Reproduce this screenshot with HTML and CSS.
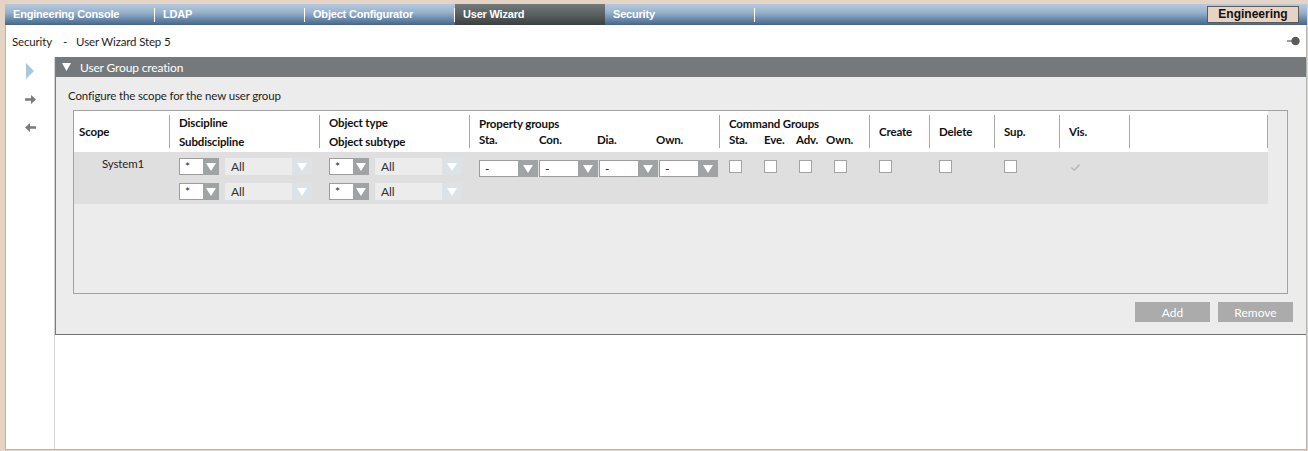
FILE: index.html
```html
<!DOCTYPE html>
<html lang="en">
<head>
  <meta charset="UTF-8" />
  <title>Security - User Wizard Step 5</title>
  <link rel="stylesheet" href="styles.css">
</head>
<body>
  <div class="frame">
    <!-- Top application tabs -->
    <nav class="tabs">
      <div class="tab">Engineering Console</div><span class="sep"></span>
      <div class="tab">LDAP</div><span class="sep"></span>
      <div class="tab">Object Configurator</div><span class="sep"></span>
      <div class="tab active">User Wizard</div>
      <div class="tab">Security</div><span class="sep"></span>
      <div class="mode">Engineering</div>
    </nav>

    <div class="crumb">
      <span>Security</span><span class="dash">-</span><span>User Wizard Step 5</span>
      <svg class="pin" width="13" height="10" viewBox="0 0 13 10">
        <line x1="0" y1="5" x2="6" y2="5" stroke="#5b5b5b" stroke-width="1.2" />
        <circle cx="8.5" cy="5" r="4.2" fill="#5b5b5b" />
      </svg>
    </div>

    <div class="main">
      <aside class="side">
        <svg class="play" width="8" height="16" viewBox="0 0 8 16"><polygon points="0,0 8,8 0,16" fill="#a9c8d8" /></svg>
        <svg class="arrow-next" width="11" height="9" viewBox="0 0 11 9"><path d="M0 3.2 H6 V0 L11 4.5 L6 9 V5.8 H0 Z" fill="#7b7b7b" /></svg>
        <svg class="arrow-prev" width="11" height="9" viewBox="0 0 11 9"><path d="M11 3.2 H5 V0 L0 4.5 L5 9 V5.8 H11 Z" fill="#7b7b7b" /></svg>
      </aside>

      <div class="content">
        <section class="panel">
          <header class="panel-head">
            <svg class="caret" width="9" height="8" viewBox="0 0 9 8"><polygon points="0,0 9,0 4.5,8" fill="#fff" /></svg>
            User Group creation
          </header>
          <div class="panel-body">
            <p class="hint">Configure the scope for the new user group</p>

            <div class="scope-table">
              <div class="thead">
                <div class="th first"><span>Scope</span></div>
                <div class="th two-line"><span>Discipline</span><span>Subdiscipline</span></div>
                <div class="th two-line"><span>Object type</span><span>Object subtype</span></div>
                <div class="th two-tight">
                  <span>Property groups</span>
                  <div class="sub-labels prop"><span>Sta.</span><span>Con.</span><span>Dia.</span><span>Own.</span></div>
                </div>
                <div class="th two-tight">
                  <span>Command Groups</span>
                  <div class="sub-labels cmd"><span>Sta.</span><span>Eve.</span><span>Adv.</span><span>Own.</span></div>
                </div>
                <div class="th"><span>Create</span></div>
                <div class="th"><span>Delete</span></div>
                <div class="th"><span>Sup.</span></div>
                <div class="th"><span>Vis.</span></div>
                <div class="th"></div>
              </div>

              <div class="trow">
                <div class="td scope-name">System1</div>
                <div class="td stack">
                  <div class="pair">
                    <div class="combo small"><span class="val">*</span><span class="btn"></span></div>
                    <div class="combo all"><span class="val">All</span><span class="btn"></span></div>
                  </div>
                  <div class="pair">
                    <div class="combo small"><span class="val">*</span><span class="btn"></span></div>
                    <div class="combo all"><span class="val">All</span><span class="btn"></span></div>
                  </div>
                </div>
                <div class="td stack">
                  <div class="pair">
                    <div class="combo small"><span class="val">*</span><span class="btn"></span></div>
                    <div class="combo all"><span class="val">All</span><span class="btn"></span></div>
                  </div>
                  <div class="pair">
                    <div class="combo small"><span class="val">*</span><span class="btn"></span></div>
                    <div class="combo all"><span class="val">All</span><span class="btn"></span></div>
                  </div>
                </div>
                <div class="td props">
                  <div class="combo prop"><span class="val">-</span><span class="btn"></span></div>
                  <div class="combo prop"><span class="val">-</span><span class="btn"></span></div>
                  <div class="combo prop"><span class="val">-</span><span class="btn"></span></div>
                  <div class="combo prop"><span class="val">-</span><span class="btn"></span></div>
                </div>
                <div class="td checks cmd">
                  <span class="box"></span><span class="box"></span><span class="box"></span><span class="box"></span>
                </div>
                <div class="td checks"><span class="box"></span></div>
                <div class="td checks"><span class="box"></span></div>
                <div class="td checks"><span class="box"></span></div>
                <div class="td checks">
                  <svg class="tick" width="13" height="13" viewBox="0 0 13 13"><path d="M2.5 6.5 L5.2 9.2 L10.5 3.6" fill="none" stroke="#b9b9b9" stroke-width="1.6" /></svg>
                </div>
                <div class="td"></div>
              </div>
            </div>

            <div class="actions">
              <button class="action">Add</button>
              <button class="action">Remove</button>
            </div>
          </div>
        </section>
      </div>
    </div>
  </div>
</body>
</html>
```

FILE: styles.css
```css
* {
  box-sizing: border-box;
}

body {
  margin: 0;
  padding: 4px 0 0 5px;
  background-color: #e5d3c3;
  font-family: Lato, "Liberation Sans", sans-serif;
  font-size: 11.5px;
  letter-spacing: -0.15px;
  color: #1f1f1f;
}

.frame {
  width: 1302px;
  height: 446px;
  background: #fff;
  border: 1px solid #b5b5b5;
  border-top: 0;
  display: flex;
  flex-direction: column;
}

/* tabs */
.tabs {
  height: 21px;
  margin: 0 -1px;
  display: flex;
  align-items: center;
  background: linear-gradient(to bottom, #b6cadf 0%, #98b2cc 40%, #6585a7 75%, #45668b 100%);
  font-family: "Liberation Sans", Arial, sans-serif;
  font-weight: bold;
  font-size: 11px;
  letter-spacing: -0.2px;
  color: #fff;
}

.tab {
  width: 149px;
  height: 21px;
  padding-left: 8px;
  line-height: 20px;
}

.tab.active {
  width: 150px;
  background: linear-gradient(to bottom, #737a7b 0%, #596060 50%, #3a403f 100%);
}

.sep {
  width: 1px;
  height: 14px;
  background: #fff;
}

.mode {
  margin-left: auto;
  margin-right: 8px;
  width: 92px;
  height: 17px;
  border: 1px solid #5e5a57;
  background: #e6d3c3;
  color: #111;
  font-size: 12px;
  letter-spacing: 0;
  text-align: center;
  line-height: 15px;
}

/* breadcrumb */
.crumb {
  height: 32px;
  display: flex;
  align-items: center;
  padding: 0 6px 0 6px;
  color: #1e1e1e;
}

.dash {
  margin: 0 9px 0 11px;
}

.pin {
  margin-left: auto;
}

/* main area */
.main {
  flex: 1;
  display: flex;
}

.side {
  width: 49px;
  border-right: 1px solid #d3d3d3;
  display: flex;
  flex-direction: column;
  align-items: center;
  padding-top: 6px;
}

.arrow-next {
  margin-top: 16px;
}

.arrow-prev {
  margin-top: 19px;
}

.content {
  flex: 1;
}

.panel {
  background: #ececec;
  border-left: 1px solid #7d7d7d;
  border-bottom: 1px solid #707070;
}

.panel-head {
  height: 20px;
  background: #75797b;
  color: #fff;
  display: flex;
  align-items: center;
  padding-left: 6px;
  font-size: 12px;
}

.caret {
  margin-right: 9px;
}

.panel-body {
  height: 257px;
  padding: 11px 18px 12px 12px;
}

.hint {
  margin: 0 0 6px;
  line-height: 16px;
}

/* scope table */
.scope-table {
  margin-left: 5px;
  height: 184px;
  border: 1px solid #a2a2a2;
  background: #ececec;
}

.thead,
.trow {
  width: 1194px;
  display: grid;
  grid-template-columns: 96px 150px 150px 250px 150px 60px 65px 65px 70px 138px;
}

.thead {
  height: 41px;
  background: #fff;
  padding-top: 4px;
  font-weight: bold;
  color: #111;
}

.th {
  height: 33px;
  border-right: 1px solid #a9a9a9;
  padding-left: 9px;
  display: flex;
  flex-direction: column;
  justify-content: center;
  line-height: 16px;
}

.th.first {
  padding-left: 5px;
}

.th.two-line {
  line-height: 19px;
}

.th.two-tight {
  line-height: 16px;
}

.sub-labels {
  display: grid;
}

.sub-labels.prop {
  grid-template-columns: 60px 58px 59px auto;
}

.sub-labels.cmd {
  grid-template-columns: 35px 32px 30px auto;
}

.trow {
  height: 52px;
  background: #dfdfdf;
}

.td {
  padding: 8px 0 0 9px;
}

.scope-name {
  padding: 4px 0 0 2px;
  text-align: center;
  line-height: 16px;
}

.stack {
  padding-top: 6px;
  display: flex;
  flex-direction: column;
  gap: 8px;
}

.pair {
  display: flex;
  gap: 6px;
}

.combo {
  height: 17px;
  display: flex;
  font-size: 12px;
}

.combo .val {
  flex: 1;
  padding-left: 5px;
  line-height: 15px;
}

.combo .btn {
  width: 16px;
  display: flex;
  align-items: center;
  justify-content: center;
  background: #9fa3a4;
}

.combo .btn::before {
  content: "";
  border-left: 5px solid transparent;
  border-right: 5px solid transparent;
  border-top: 8px solid #fff;
}

.combo.small {
  width: 40px;
}

.combo.small .val,
.combo.prop .val {
  background: #fff;
  border: 1px solid #9d9d9d;
  border-right: 0;
}

.combo.all {
  width: 87px;
  background: #ececec;
  color: #333;
}

.combo.all .val {
  line-height: 17px;
  padding-left: 6px;
}

.combo.all .btn {
  width: 20px;
  background: #dce2e5;
}

.props {
  display: flex;
  gap: 1px;
}

.combo.prop {
  width: 59px;
}

.combo.prop .btn {
  width: 20px;
}

.checks {
  display: flex;
}

.checks.cmd {
  gap: 22px;
}

.box {
  width: 13px;
  height: 13px;
  background: #fff;
  border: 1px solid #a3a3a3;
}

.tick {
  margin-top: 1px;
}

/* buttons */
.actions {
  margin-top: 8px;
  margin-right: -5px;
  display: flex;
  justify-content: flex-end;
  gap: 8px;
}

.action {
  width: 75px;
  height: 20px;
  border: 0;
  background: #ababab;
  color: #fff;
  font-family: Lato, "Liberation Sans", sans-serif;
  font-size: 12px;
  padding: 0;
}
```
